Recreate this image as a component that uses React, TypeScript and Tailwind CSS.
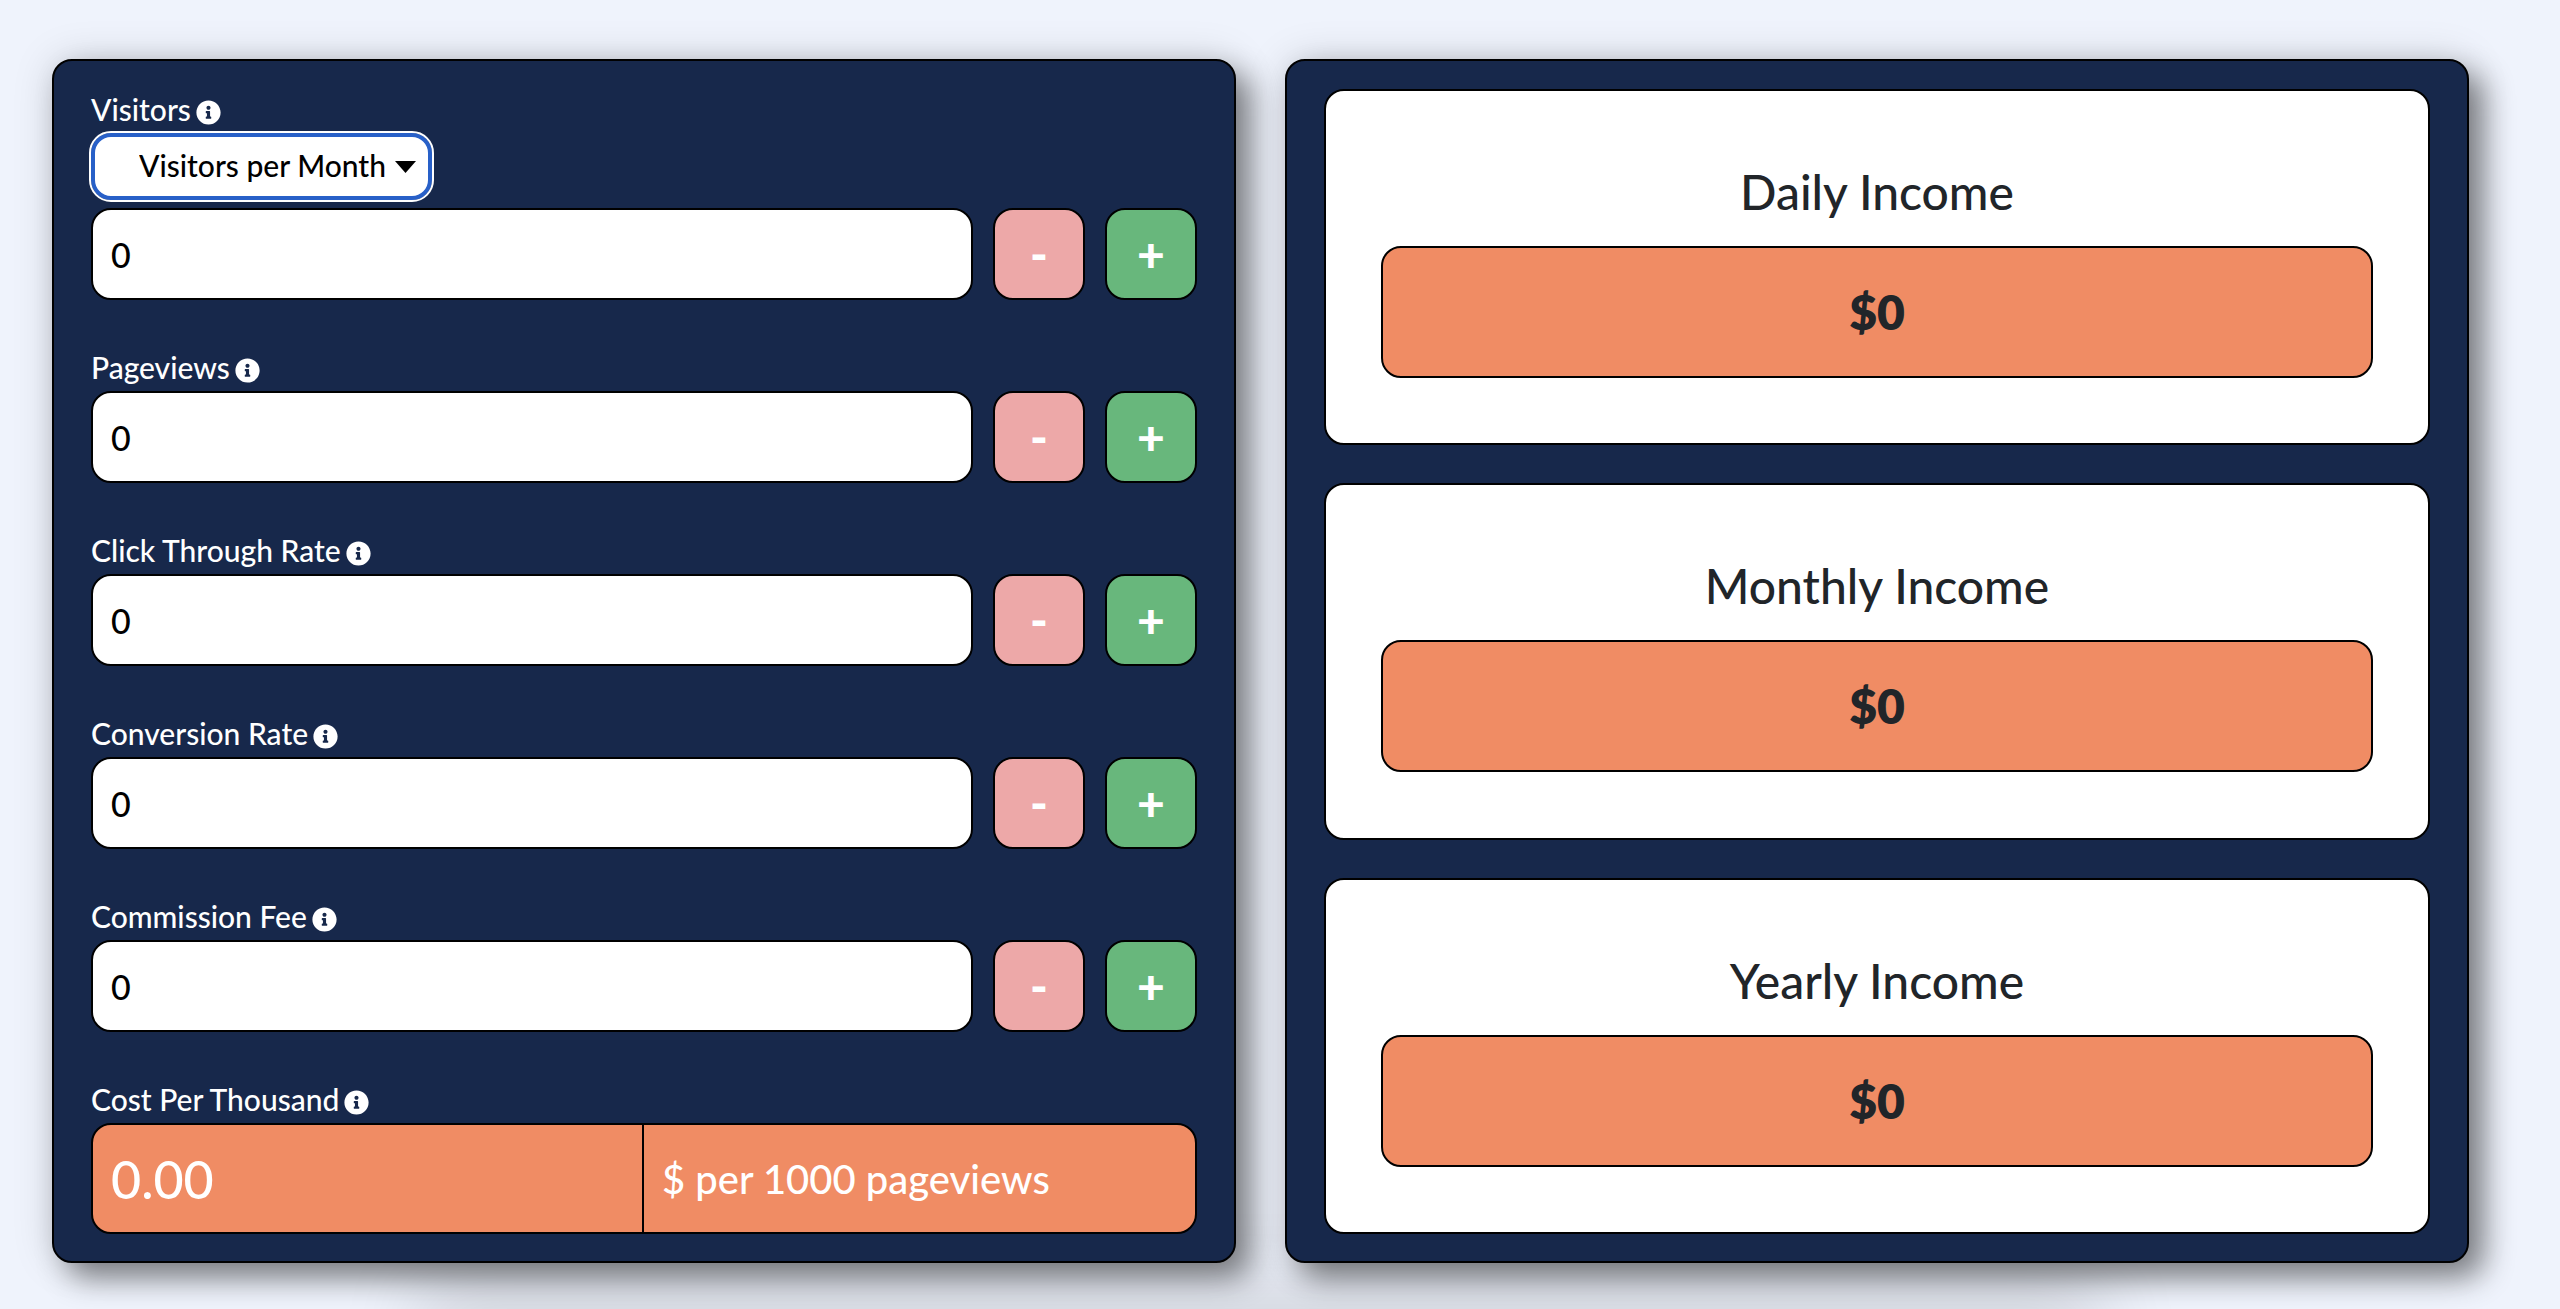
import React, { useState } from "react";
import { FaInfoCircle } from "react-icons/fa";

interface NumberFieldProps {
  id: string;
  label: string;
  children?: React.ReactNode;
}

interface IncomeCardProps {
  title: string;
  amount: number;
}

const Label: React.FC<{ id: string; text: string }> = ({ id, text }) => (
  <div className="mb-1 flex h-10 items-center gap-[5px]">
    <label htmlFor={id} className="text-3xl leading-10 font-medium">
      {text}
    </label>
    <FaInfoCircle className="mt-1.5 size-[25px]" />
  </div>
);

const NumberField: React.FC<NumberFieldProps> = ({ id, label, children }) => {
  const [value, setValue] = useState<number>(0);

  return (
    <div>
      <Label id={id} text={label} />
      {children}
      <div className="flex gap-5">
        <input
          id={id}
          type="text"
          inputMode="numeric"
          value={value}
          onChange={(e) => setValue(Number(e.target.value) || 0)}
          className="h-[92px] min-w-0 flex-1 rounded-[20px] border-2 border-black bg-white px-[18px] text-[34px] font-medium text-black outline-none"
        />
        <button
          type="button"
          aria-label={`Decrease ${label}`}
          onClick={() => setValue(Math.max(0, value - 1))}
          className="size-[92px] shrink-0 rounded-[20px] border-2 border-black bg-[#eda8a8] text-5xl leading-none font-black"
        >
          -
        </button>
        <button
          type="button"
          aria-label={`Increase ${label}`}
          onClick={() => setValue(value + 1)}
          className="size-[92px] shrink-0 rounded-[20px] border-2 border-black bg-[#68b77c] text-5xl leading-none font-black"
        >
          +
        </button>
      </div>
    </div>
  );
};

const IncomeCard: React.FC<IncomeCardProps> = ({ title, amount }) => (
  <div className="flex flex-1 flex-col justify-center rounded-[20px] border-2 border-black bg-white px-[55px] pt-1.5 text-center text-[#212529]">
    <h2 className="mb-6 text-5xl leading-[60px] font-medium">{title}</h2>
    <p className="rounded-[20px] border-2 border-black bg-[#f08c64] py-8 text-5xl leading-16 font-extrabold">
      ${amount}
    </p>
  </div>
);

const App: React.FC = () => {
  const [period, setPeriod] = useState<string>("month");

  return (
    <main className="flex min-h-screen flex-col overflow-hidden bg-[#eff3fc] pt-[59px] pr-[91px] pl-[52px] font-['Lato',sans-serif]">
      <div className="z-10 grid grid-cols-2 gap-[49px]">
        <section className="flex flex-col gap-[47px] rounded-[20px] border-2 border-black bg-[#17284b] px-[37px] pt-7 pb-[27px] text-white shadow-[15px_15px_30px_rgba(0,0,0,0.45),0_0_40px_rgba(0,0,0,0.15)]">
          <NumberField id="visitors" label="Visitors">
            <div className="relative mb-2 w-fit">
              <select
                aria-label="Visitors period"
                value={period}
                onChange={(e) => setPeriod(e.target.value)}
                className="h-[67px] appearance-none rounded-[20px] border-4 border-[#2860c8] bg-white pr-[41px] pb-1 pl-11 text-3xl font-medium text-black outline-2 outline-white"
              >
                <option value="month">Visitors per Month</option>
                <option value="day">Visitors per Day</option>
              </select>
              <svg
                viewBox="0 0 21 12"
                className="pointer-events-none absolute top-7 right-4 w-[21px] fill-black"
              >
                <path d="M0 0h21L10.500 12z" />
              </svg>
            </div>
          </NumberField>
          <NumberField id="pageviews" label="Pageviews" />
          <NumberField id="ctr" label="Click Through Rate" />
          <NumberField id="conversion" label="Conversion Rate" />
          <NumberField id="commission" label="Commission Fee" />
          <div>
            <Label id="cpm" text="Cost Per Thousand" />
            <div className="flex h-[111px] items-center overflow-hidden rounded-[20px] border-2 border-black bg-[#f08c64]">
              <input
                id="cpm"
                type="text"
                defaultValue="0.00"
                className="h-full w-1/2 border-r-2 border-black px-[18px] text-[52px] font-medium outline-none"
              />
              <span className="px-[18px] text-[40px] font-medium">
                $ per 1000 pageviews
              </span>
            </div>
          </div>
        </section>
        <section className="flex flex-col gap-[38px] rounded-[20px] border-2 border-black bg-[#17284b] px-[37px] pt-7 pb-[27px] shadow-[15px_15px_30px_rgba(0,0,0,0.45),0_0_40px_rgba(0,0,0,0.15)]">
          <IncomeCard title="Daily Income" amount={0} />
          <IncomeCard title="Monthly Income" amount={0} />
          <IncomeCard title="Yearly Income" amount={0} />
        </section>
      </div>
      <div className="mx-auto mt-auto -mb-10 h-10 w-[68%] shrink-0 shadow-[0_0_80px_20px_rgba(0,0,0,0.15)]" />
    </main>
  );
};

export default App;
